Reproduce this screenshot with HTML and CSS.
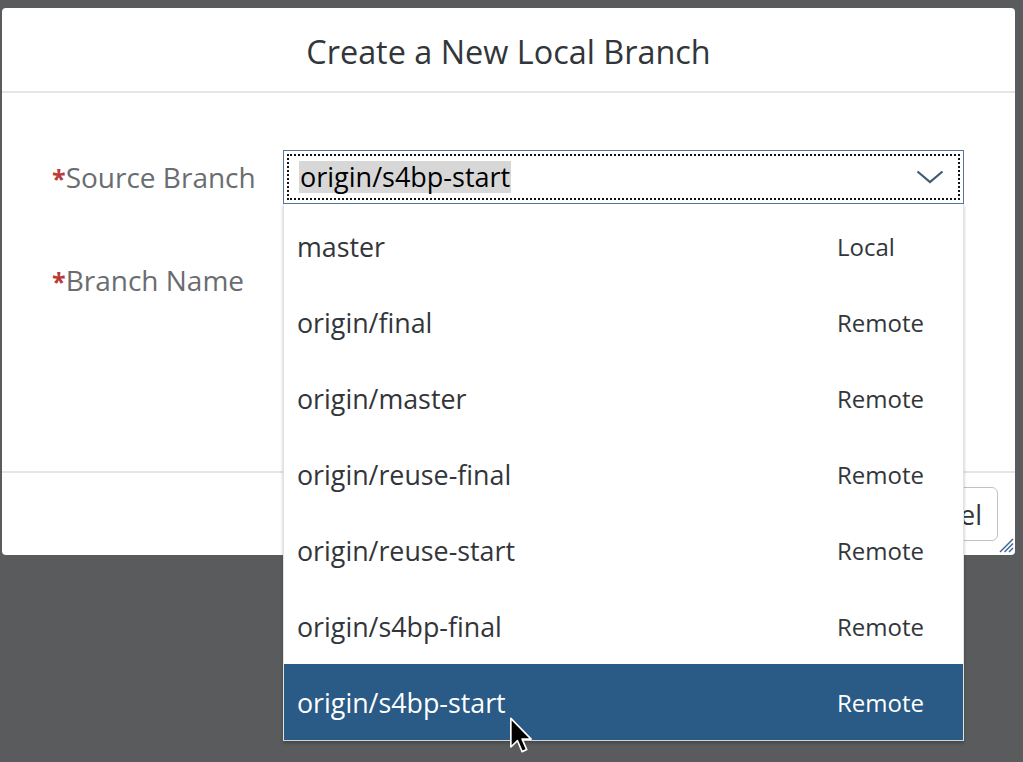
FILE: index.html
```html
<!DOCTYPE html>
<html lang="en">
<head>
<meta charset="utf-8">
<title>Create a New Local Branch</title>
<link rel="stylesheet" href="styles.css">
</head>
<body>
<div class="dialog">
  <header class="dialog-header">Create a New Local Branch</header>
  <div class="dialog-content">
    <div class="form-row">
      <label class="form-label"><span class="req">*</span>Source Branch</label>
      <div class="select">
        <div class="select-inner">
          <span class="select-value">origin/s4bp-start</span>
          <svg class="chevron" width="28" height="14" viewBox="0 0 28 14"><polyline points="1.5,1.5 14,12 26.5,1.5" fill="none" stroke="#3f5a74" stroke-width="2.2"/></svg>
        </div>
        <ul class="dropdown">
          <li class="option"><span class="opt-text">master</span><span class="opt-info">Local</span></li>
          <li class="option"><span class="opt-text">origin/final</span><span class="opt-info">Remote</span></li>
          <li class="option"><span class="opt-text">origin/master</span><span class="opt-info">Remote</span></li>
          <li class="option"><span class="opt-text">origin/reuse-final</span><span class="opt-info">Remote</span></li>
          <li class="option"><span class="opt-text">origin/reuse-start</span><span class="opt-info">Remote</span></li>
          <li class="option"><span class="opt-text">origin/s4bp-final</span><span class="opt-info">Remote</span></li>
          <li class="option selected"><span class="opt-text">origin/s4bp-start</span><span class="opt-info">Remote</span></li>
        </ul>
      </div>
    </div>
    <div class="form-row">
      <label class="form-label"><span class="req">*</span>Branch Name</label>
      <div class="text-input"></div>
    </div>
  </div>
  <footer class="dialog-footer">
    <button class="btn">Cancel</button>
  </footer>
  <svg class="resize-handle" width="16" height="16" viewBox="0 0 16 16">
    <line x1="15" y1="2" x2="2" y2="15" stroke="#3a6690" stroke-width="1.5"/>
    <line x1="15" y1="6.5" x2="6.5" y2="15" stroke="#3a6690" stroke-width="1.5"/>
    <line x1="15" y1="11" x2="11" y2="15" stroke="#3a6690" stroke-width="1.5"/>
  </svg>
</div>
<svg class="cursor" width="24" height="38" viewBox="0 0 13 20">
  <path d="M1,1 L1,16.5 L4.6,13.1 L7.1,19 L9.6,17.9 L7.1,12.2 L12,12.2 Z" fill="#000" stroke="#fff" stroke-width="0.9" stroke-linejoin="round"/>
</svg>
</body>
</html>
```
FILE: styles.css
```css
* { box-sizing: border-box; }
html, body { margin: 0; padding: 0; }
body {
  background: #5a5b5d;
  font-family: "Open Sans", "Noto Sans", sans-serif;
  color: #32363a;
  width: 1023px;
  height: 762px;
  overflow: hidden;
  position: relative;
}
.dialog {
  margin: 8px 0 0 2px;
  width: 1013px;
  height: 547px;
  background: #fff;
  border-radius: 4px;
  display: flex;
  flex-direction: column;
  position: relative;
}
.dialog-header {
  height: 85px;
  border-bottom: 2px solid #e5e5e5;
  display: flex;
  align-items: center;
  justify-content: center;
  font-size: 32.4px;
  color: #32363a;
  padding-top: 2px;
}
.dialog-content {
  height: 378px;
  padding: 57px 0 0 50px;
}
.form-row {
  display: flex;
  align-items: center;
  height: 54px;
  margin-bottom: 49px;
}
.form-label {
  width: 231px;
  font-size: 28px;
  color: #6a6d70;
}
.req {
  color: #b83a3a;
  font-weight: 700;
  font-size: 25px;
}
.select {
  position: relative;
  width: 681px;
  height: 54px;
  border: 1px solid #54779a;
  padding: 3px;
  background: #fff;
}
.select-inner {
  height: 100%;
  border: 2px dotted #111;
  display: flex;
  align-items: center;
  justify-content: space-between;
  padding: 0 14px 0 10px;
}
.select-value {
  font-size: 27px;
  line-height: 32px;
  background: #d7d7d7;
  color: #000;
  padding: 0 1px;
}
.chevron { display: block; }
.dropdown {
  position: absolute;
  top: calc(100% + 1px);
  left: -1px;
  width: 681px;
  margin: 0;
  padding: 4px 0 0;
  list-style: none;
  background: #fff;
  border-left: 1px solid #e3e3e3;
  border-right: 1px solid #e3e3e3;
  border-bottom: 1px solid #d5d5d5;
  box-shadow: 0 2px 3px rgba(0, 0, 0, 0.25);
  z-index: 5;
}
.option {
  display: grid;
  grid-template-columns: 1fr 126px;
  align-items: center;
  height: 76px;
  padding-left: 13px;
}
.opt-text {
  font-size: 26.8px;
  color: #32363a;
}
.opt-info {
  font-size: 24px;
  color: #32363a;
}
.option.selected {
  background: #2a5a86;
}
.option.selected .opt-text,
.option.selected .opt-info {
  color: #fff;
}
.text-input {
  width: 681px;
  height: 54px;
  border: 1px solid #89919a;
}
.dialog-footer {
  height: 84px;
  border-top: 2px solid #e5e5e5;
  display: flex;
  align-items: center;
  justify-content: flex-end;
  padding-right: 17px;
}
.btn {
  height: 54px;
  border: 1px solid #c2c2c2;
  border-radius: 6px;
  background: #fff;
  font-family: "Open Sans", "Noto Sans", sans-serif;
  font-size: 27px;
  color: #32363a;
  padding: 0 15px;
}
.resize-handle {
  position: absolute;
  right: 1px;
  bottom: 2px;
}
.cursor {
  position: absolute;
  left: 509px;
  top: 716px;
  z-index: 10;
}
```
